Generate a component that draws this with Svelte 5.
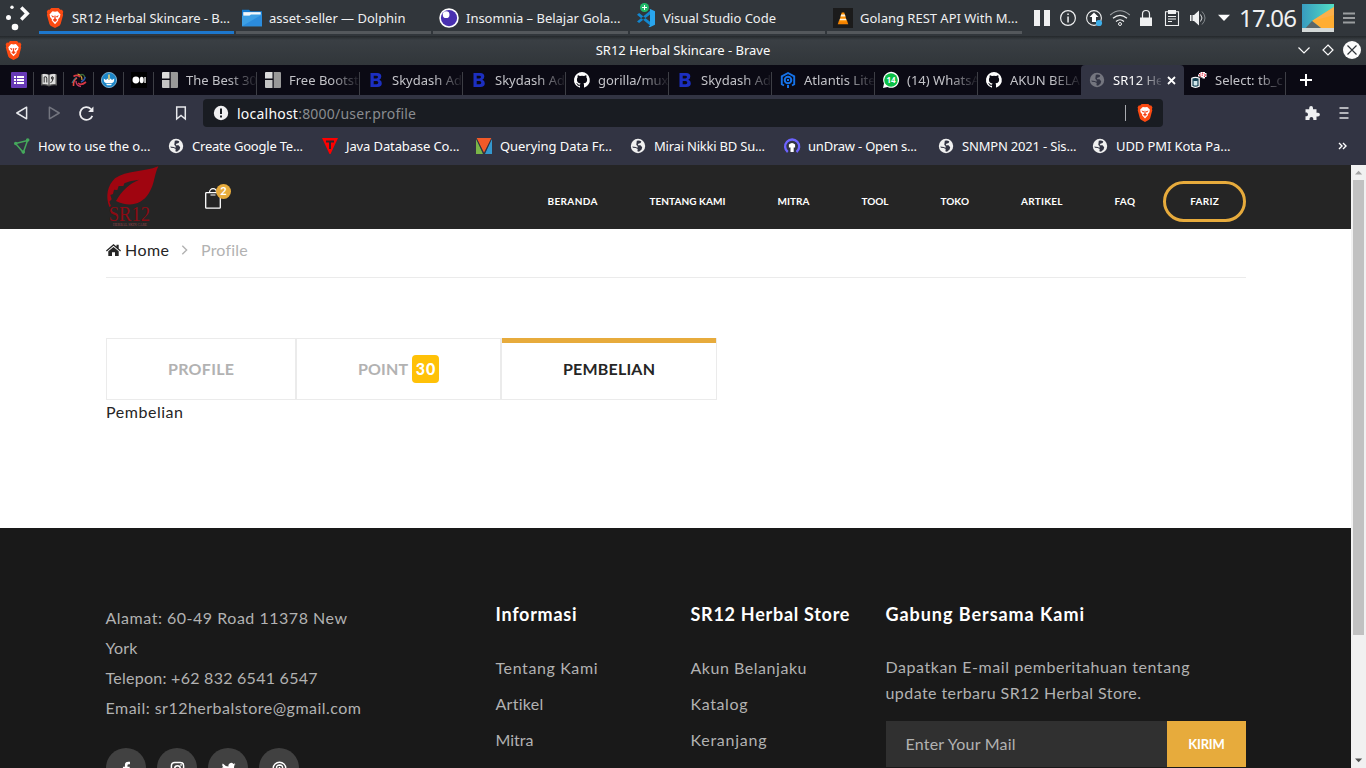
<script>
  const tasks = [
    { icon: 'brave', label: 'SR12 Herbal Skincare - B...', w: 158, active: true },
    { icon: 'folder', label: 'asset-seller — Dolphin', w: 136.5 },
    { icon: 'insomnia', label: 'Insomnia – Belajar Gola...', w: 154.5 },
    { icon: 'vscode', label: 'Visual Studio Code', w: 113 },
    { icon: 'vlc', label: 'Golang REST API With M...', w: 158 }
  ];
  const tray = ['pause', 'info', 'update', 'wifi', 'lock', 'clipboard', 'volume', 'caret'];
  const pinned = ['list', 'book', 'swirl', 'crest', 'medium'];
  const tabs = [
    { icon: 'blocks', label: 'The Best 30' },
    { icon: 'blocks', label: 'Free Bootst' },
    { icon: 'bold', label: 'Skydash Ad' },
    { icon: 'bold', label: 'Skydash Ad' },
    { icon: 'github', label: 'gorilla/mux' },
    { icon: 'bold', label: 'Skydash Ad' },
    { icon: 'atlantis', label: 'Atlantis Lite' },
    { icon: 'whatsapp', label: '(14) WhatsA' },
    { icon: 'github', label: 'AKUN BELA' },
    { icon: 'globe', label: 'SR12 He', active: true },
    { icon: 'database', label: 'Select: tb_c' }
  ];
  const bookmarks = [
    { icon: 'graph', label: 'How to use the o...', w: 112.5 },
    { icon: 'globe', label: 'Create Google Te...', w: 111 },
    { icon: 'tri', label: 'Java Database Co...', w: 113.5 },
    { icon: 'vee', label: 'Querying Data Fr...', w: 112 },
    { icon: 'globe', label: 'Mirai Nikki BD Su...', w: 111 },
    { icon: 'undraw', label: 'unDraw - Open s...', w: 109 },
    { icon: 'globe', label: 'SNMPN 2021 - Sis...', w: 114.5 },
    { icon: 'globe', label: 'UDD PMI Kota Pa...', w: 114.5 }
  ];
  const nav = [
    { label: 'BERANDA', w: 50 },
    { label: 'TENTANG KAMI', w: 76 },
    { label: 'MITRA', w: 32 },
    { label: 'TOOL', w: 27 },
    { label: 'TOKO', w: 28.5 },
    { label: 'ARTIKEL', w: 41.5 },
    { label: 'FAQ', w: 20.5 }
  ];
  const address = [
    { label: 'Alamat: 60-49 Road 11378 New', w: 241.5 },
    { label: 'York', w: 32 },
    { label: 'Telepon: +62 832 6541 6547', w: 212 },
    { label: 'Email: sr12herbalstore@gmail.com', w: 255.5 }
  ];
  const columns = [
    { title: 'Informasi', w: 81, links: [['Tentang Kami', 102], ['Artikel', 48], ['Mitra', 38]] },
    { title: 'SR12 Herbal Store', w: 159, links: [['Akun Belanjaku', 116], ['Katalog', 57], ['Keranjang', 76]] }
  ];
  const socials = ['facebook', 'instagram', 'twitter', 'pinterest'];

  // Spreads the letters of a label over a given width.
  function fit(node, width) {
    const range = document.createRange();
    range.selectNodeContents(node);
    const natural = range.getBoundingClientRect().width;
    const count = [...node.textContent].length;
    const gap = (width - natural) / Math.max(1, count - 1);
    node.style.letterSpacing = gap.toFixed(3) + 'px';
    node.style.marginRight = (-gap).toFixed(3) + 'px';
  }
</script>

{#snippet icon(name, size = 16)}
  <svg class="icon" width={size} height={size} viewBox="0 0 16 16" fill="none">
    {#if name === 'brave'}
      <path d="M5 0h6l1.3 1.4 1.3-.1 1 1.7-.4 1.5.3 1-2 7.3-.9 1.3L8 16l-3.600-1.900-.9-1.300-2-7.300.3-1L1.400 3l1-1.700 1.300.1z" fill="#fb4a12" />
      <path d="M8 2.900 10 2.600l2.400 2.600-.4 1.100.1.700-1.600 2 .1 1L8 12.900 5.400 10l.1-1-1.600-2 .1-.7-.4-1.100L6 2.600z" fill="#fff" />
      <path d="M4.800 5.700 7.200 6.500 6.400 7.700zM11.200 5.700 8.800 6.500l.8 1.200zM7.600 6h.8l.2 2.600L10 9.500 8 10.500 6 9.500l1.400-.9zM6.300 10 8 11.200 9.700 10 8 10.600z" fill="#f33c11" />
    {:else if name === 'folder'}
      <path d="M0 1.300h5.600l1.200 1.200H16V14H0z" fill="#147bd0" />
      <path d="M1 3.300h14v3H1z" fill="#f4f8fb" />
      <path d="M0 6.200h6l1.100-1H16v9.300H0z" fill="#3d9fe4" />
      <path d="M0 14.500 16 5.200v9.300z" fill="#2b8cdd" />
    {:else if name === 'insomnia'}
      <circle cx="8" cy="8" r="7.800" fill="#fff" />
      <circle cx="8" cy="8" r="6.500" fill="#4930b0" />
      <circle cx="5.700" cy="5.300" r="2.700" fill="#fff" />
    {:else if name === 'vscode'}
      <path d="m.8 5.300 1.700-1.300L12 11.500v3zM.8 10.700l1.700 1.300L12 4.500v-3z" fill="#1287cf" />
      <path d="m11 .6 4.200 2v10.800l-4.200 2-1-.6 1.200-.8V2z" fill="#29a5ed" />
    {:else if name === 'vlc'}
      <rect width="16" height="16" fill="#1b1b1b" />
      <path d="M4.800 10h6.400l1 3H3.800z" fill="#f58300" />
      <path d="M7 3.500h2L11.200 11H4.800z" fill="#ff9100" />
      <path d="M6.500 5.100h3l.5 1.700H6zM5.600 8.500h4.800l.4 1.300H5.200z" fill="#fff3df" />
    {:else if name === 'pause'}
      <path d="M0 0h6v16H0zM10 0h6v16h-6z" fill="#eff0f1" />
    {:else if name === 'info'}
      <circle cx="8" cy="8" r="7.400" stroke="#eff0f1" stroke-width="1.200" />
      <path d="M7.300 3.500h1.500V5H7.300zM7.300 6.500h1.500v6H7.300z" fill="#eff0f1" />
    {:else if name === 'update'}
      <circle cx="8" cy="8" r="7.400" stroke="#eff0f1" stroke-width="1.100" />
      <path d="M8 2.500 12.500 7H10v5H6V7H3.500z" fill="#fff" />
      <circle cx="13" cy="13" r="3.100" fill="#3daee9" />
    {:else if name === 'wifi'}
      <path d="M-1.800 5Q8-3.500 17.800 5" stroke="#9da1a5" stroke-width="1.100" />
      <path d="M1 8.300q7-6 14 0M4 11.500q4-3.500 8 0" stroke="#eff0f1" stroke-width="1.200" />
      <circle cx="8" cy="14" r="1.500" stroke="#eff0f1" />
    {:else if name === 'lock'}
      <path d="M4.500 8V4a3.500 3.500 0 0 1 7 0v4" stroke="#eff0f1" stroke-width="1.200" />
      <path d="M2 7.500h12V16H2z" fill="#eff0f1" />
    {:else if name === 'clipboard'}
      <path d="M1.500 1.800h13v13.700h-13z" stroke="#eff0f1" stroke-width="1.100" />
      <path d="M4 0h8v4H4z" fill="#eff0f1" />
      <path d="M4 6.500h8M4 9h8M4 11.500h4" stroke="#eff0f1" />
    {:else if name === 'volume'}
      <path d="M0 5h1.500v6H0zM2.500 5H4l5-4.500v15L4 11H2.500z" fill="#eff0f1" />
      <path d="M10.500 4.500q3 3.500 0 7" stroke="#dfe1e2" />
      <path d="M12 1.500q6 6.500 0 13" stroke="#83888c" />
    {:else if name === 'caret'}
      <path d="M2 4.800h12l-6 6.200z" fill="#fcfcfc" />
    {:else if name === 'list'}
      <rect width="16" height="16" rx="1" fill="#673ab7" />
      <path d="M3 4h2v2H3zM3 7h2v2H3zM3 10h2v2H3zM6 4h7v2H6zM6 7h7v2H6zM6 10h7v2H6z" fill="#fff" />
    {:else if name === 'book'}
      <path d="M0 2.500q4-1.500 8 .5 4-2 8-.5v11q-4-.8-8 1-4-1.800-8-1z" fill="#5c5c5c" />
      <path d="M1.500 2q4-.5 6.500 1v10q-3-1.500-6.500-1zM14.500 2Q10.500 1.500 8 3v10q3-1.500 6.500-1z" fill="#dedede" />
      <path d="M3.200 5v5.500M3.200 5q2.600-1 2.600 1v4.500M11.800 4.500a1.500 1.500 0 1 0 .2 3V5q0 5-2.500 6M8 3v10" stroke="#333" stroke-width="1" />
    {:else if name === 'swirl'}
      <path d="M9 5Q6 2 2.500 4.500" stroke="#d83743" stroke-width="1.700" />
      <path d="M11 8Q11 3 6.500 2" stroke="#e0a53b" stroke-width="1.200" />
      <path d="M9 3q4-2 5 3" stroke="#3c6a3c" stroke-width="1.400" />
      <path d="M10 10q4-2 4-5" stroke="#3157a8" stroke-width="1.600" />
      <path d="M7 11q3 3 8-1" stroke="#d83743" stroke-width="1.700" />
      <path d="M5 9q0 5 5 5.500" stroke="#c23a6a" stroke-width="1.400" />
      <path d="M6 6q-4 2-3.500 8" stroke="#e7493f" stroke-width="1.600" />
      <path d="M5.500 5Q2 8 1 11" stroke="#3b8a9b" stroke-width="1" />
    {:else if name === 'crest'}
      <circle cx="8" cy="8" r="7.600" fill="#1c86c8" stroke="#8fc3e2" stroke-width=".8" />
      <path d="M2.800 6.500 5 8l1.500-1.500L8 8l1.500-1.500L11 8l2.200-1.500Q13.500 10.500 11 11H5Q2.500 10.500 2.800 6.500M5 11.800h6l-1 1.500H6z" fill="#fff" />
      <path d="M7.200 2.500h1.600v5H7.200z" fill="#ead07a" />
    {:else if name === 'medium'}
      <rect width="16" height="16" fill="#000" />
      <circle cx="4.900" cy="8" r="3.400" fill="#fff" /><ellipse cx="10.700" cy="8" rx="2" ry="3.200" fill="#fff" /><path d="M13.400 5h1.300v6h-1.300z" fill="#fff" />
    {:else if name === 'blocks'}
      <path d="M0 1q0-1 1-1h6.500v6.500H0z" fill="#dcdcdc" />
      <path d="M0 8h7.500v8H1q-1 0-1-1z" fill="#c4c4c4" />
      <path d="M8.700 0H15q1 0 1 1v14q0 1-1 1H8.700z" fill="#999" />
    {:else if name === 'bold'}
      <path fill-rule="evenodd" d="M2.500 1h6.800q4 0 4 3.500 0 2.400-2 3.200 2.500.7 2.500 3.500 0 3.800-4.500 3.800H2.500zm3.200 2.700v2.800h2.600q1.700 0 1.700-1.400T8.300 3.700zm0 5.300v3.200h2.900q1.700 0 1.700-1.600T8.600 9z" fill="#1c2fc0" />
    {:else if name === 'github'}
      <path d="M8 0a8 8 0 0 0-2.530 15.590c.4.070.55-.17.55-.38v-1.490C3.800 14.200 3.330 12.700 3.330 12.700c-.36-.92-.89-1.170-.89-1.170-.72-.5.060-.49.060-.49.800.06 1.230.83 1.230.83.710 1.220 1.870.87 2.330.66.070-.51.280-.87.500-1.070-1.770-.2-3.640-.89-3.640-3.950 0-.87.310-1.590.82-2.150-.08-.2-.35-1.020.08-2.120 0 0 .67-.21 2.200.82a7.600 7.600 0 0 1 4 0c1.530-1.030 2.200-.82 2.200-.82.43 1.100.16 1.920.08 2.120.51.560.82 1.270.82 2.150 0 3.070-1.870 3.750-3.650 3.950.29.250.54.730.54 1.480v2.190c0 .21.150.46.550.38A8 8 0 0 0 8 0" fill="#fff" />
    {:else if name === 'atlantis'}
      <path d="M4 13.500 1.800 12.300V4.300L8 1l6.200 3.300v8L12 13.500" stroke="#1572e8" stroke-width="1.900" />
      <circle cx="8" cy="8" r="3.300" stroke="#1572e8" stroke-width="2" />
      <path d="M8 7v2M8 13v3" stroke="#1572e8" stroke-width="2" />
    {:else if name === 'whatsapp'}
      <path d="M0 16 1 11.500A8 8 0 1 1 4.500 15z" fill="#fff" />
      <circle cx="8" cy="8" r="6.800" fill="#0bbf46" />
      <text x="8" y="11" text-anchor="middle" font-size="8" font-weight="700" fill="#fff">14</text>
    {:else if name === 'globe'}
      <circle cx="8" cy="8" r="7.200" fill="#f0f0f0" />
      <path d="M6.800 2.800Q9.500 2 11.300 3.600l-.7 1.500-2.300.6-.6 1.500 2.800.1 1.700 2-.6 2.200-2.600 2.200-1.600-.4.300-2.400-2-1-2.800-.1-.6-1.200 3.300.4 1.900.7.300-1-1.500-1.900z" fill="#323443" />
    {:else if name === 'database'}
      <path d="M.8 6.300q3.700-2 7.400 0v8q-3.700 2-7.400 0z" fill="#123f50" stroke="#fff" stroke-width="1.200" />
      <path d="M2.600 8.700q1.900.8 3.800 0v4.500q-1.900.8-3.800 0z" fill="#cfe6ea" />
      <path d="M8 1h1.500V0H14v1h1.500v4H14v1.500h-2.500v-1H9.500v-1H7V2.500h1z" fill="#fff" />
      <path d="M9.800 1.500 8.300 3l1.500 1.400M13 1.500 14.500 3 13 5M11 1.200h1M11.200 2.500v1.300" stroke="#e1122c" stroke-width="1" />
    {:else if name === 'graph'}
      <path d="m1.500 5.500 12-3-4.200 12z" stroke="#45a85c" stroke-width="1.500" />
      <circle cx="1.700" cy="5.500" r="1.700" fill="#45a85c" /><circle cx="13.700" cy="2" r="1.800" fill="#45a85c" /><circle cx="9.300" cy="14" r="1.800" fill="#45a85c" />
    {:else if name === 'tri'}
      <path d="M0 0h16L8.500 16h-1z" fill="#f00" />
      <path d="M4 2.500h8v2H9V11H7V4.500H4z" fill="#2f2630" />
    {:else if name === 'vee'}
      <path d="M0 0v16h7z" fill="#7ab648" /><path d="M16 0v16H9z" fill="#3498cf" /><path d="M.5 0h15L8 15z" fill="#f15a29" />
      <path d="m0 0 8 16 8-16" stroke="#323443" />
    {:else if name === 'undraw'}
      <path d="M3.800 14A7 7 0 1 1 12.500 14" stroke="#6c63ff" stroke-width="2.400" />
      <path d="M4.900 6.500Q8 3.500 11.100 6.500v3H9.700V14H6.500V9.500H4.900z" fill="#fff" />
    {:else if name === 'back'}
      <path d="M12.600 2.200v11.600L2.800 8z" stroke="#e7e8ec" stroke-width="1.500" stroke-linejoin="round" />
    {:else if name === 'forward'}
      <path d="M3.400 2.200v11.600L13.200 8z" stroke="#73757f" stroke-width="1.500" stroke-linejoin="round" />
    {:else if name === 'reload'}
      <path d="M13.500 10.200A6 6 0 1 1 12.200 3.800" stroke="#eeeef1" stroke-width="1.600" />
      <path d="M14.500 1.500v5h-5z" fill="#eeeef1" />
    {:else if name === 'ribbon'}
      <path d="M3.700 2h8.600v12L8 10.500 3.700 14z" stroke="#e7e8ec" stroke-width="1.500" />
    {:else if name === 'warn'}
      <circle cx="8" cy="8" r="7.200" fill="#f0f0f2" /><path d="M7 3.500h2V9H7zM7 10.500h2v2H7z" fill="#191c22" />
    {:else if name === 'puzzle'}
      <path d="M1.500 4.200h3.700V3a1.900 1.900 0 0 1 3.800 0v1.200h3.500v3.500H14a1.900 1.900 0 0 1 0 3.800h-1.500V15H9.300v-1.200a1.900 1.900 0 0 0-3.800 0V15h-4v-3.800H2.700a1.900 1.900 0 0 0 0-3.600H1.500z" fill="#eff0f2" />
    {:else if name === 'bars'}
      <path d="M3.500 3h9M3.500 8h9M3.500 13h9" stroke="#dfe0e3" stroke-width="1.700" />
    {:else if name === 'facebook'}
      <path d="M6.300 16V9H4.200V6.200h2.100V4.300Q6.300.7 9.700.7q1.200 0 2 .2v2.500h-1.300q-1.400 0-1.400 1.400v1.400h2.500L11.100 9H9v7z" fill="#fff" />
    {:else if name === 'instagram'}
      <rect x="1.500" y="1.500" width="13" height="13" rx="3.500" stroke="#fff" stroke-width="1.600" /><circle cx="8" cy="8" r="3" stroke="#fff" stroke-width="1.600" /><circle cx="11.800" cy="4.200" r=".9" fill="#fff" />
    {:else if name === 'twitter'}
      <path d="M15.500 3.500q-.8.400-1.700.5 1-.6 1.300-1.600l-1.900.7a3 3 0 0 0-5.200 2.700Q4.300 5.600 1.900 2.700a3 3 0 0 0 .9 4l-1.300-.4a3 3 0 0 0 2.400 3l-1.300.1a3 3 0 0 0 2.800 2A6 6 0 0 1 1 12.700 8.500 8.500 0 0 0 14 5z" fill="#fff" />
    {:else if name === 'pinterest'}
      <circle cx="8" cy="8" r="6.700" stroke="#fff" stroke-width="1.500" />
      <path d="M5.400 9.200Q3.600 4.500 8 4.300q3.600 0 3.200 3.100-.5 3-2.600 2.900-1.100-.1-1.300-1L6.200 14M8.200 6.500l-1 3" stroke="#fff" stroke-width="1.600" />
    {/if}
  </svg>
{/snippet}

<div class="screen">
  <div class="taskbar">
    <svg class="launcher" width="30" height="34" viewBox="0 0 30 34" fill="#fcfcfc">
      <circle cx="12" cy="7.300" r="1.700" /><circle cx="8.500" cy="17.500" r="2.500" /><circle cx="15" cy="27" r="3.300" />
      <path d="m20 8.700 2.400-2.400 7.300 7.200-7.300 7.200-2.400-2.400 4.700-4.800z" />
    </svg>
    <div class="tasks">
      {#each tasks as t}
        <div class="task" class:active={t.active}>
          <span class="taskicon">{@render icon(t.icon, 20)}
            {#if t.icon === 'vscode'}<span class="plus"><svg width="9" height="9" viewBox="0 0 9 9"><circle cx="4.500" cy="4.500" r="4.500" fill="#20b868" /><path d="M4.500 2v5M2 4.500h5" stroke="#fff" /></svg></span>{/if}
          </span>
          <span use:fit={t.w}>{t.label}</span>
        </div>
      {/each}
    </div>
    <div class="tray">
      {#each tray as t}<span class="cell">{@render icon(t)}</span>{/each}
    </div>
    <span class="clock"><span use:fit={58}>17.06</span></span>
    <svg class="wallpaper" width="32" height="28" viewBox="0 0 32 28">
      <defs><linearGradient id="sea" x2="1"><stop stop-color="#389bc0" /><stop offset="1" stop-color="#52dfc4" /></linearGradient></defs>
      <path d="M0 0h32v28H0z" fill="url(#sea)" /><path d="M32 3v25H24L10 17z" fill="#ffad32" /><path d="m10 17 22-6V3z" fill="#fbb04b" /><path d="m10 17 14 11H0z" fill="#5b6668" /><path d="M0 24h32v4H0z" fill="#d4d9d8" />
    </svg>
    <svg class="sandwich" width="12" height="12" viewBox="0 0 12 12"><path d="M0 1.500h12M0 6h12M0 10.500h12" stroke="#9a9d9f" stroke-width="2" /></svg>
  </div>

  <div class="titlebar">
    <span class="appicon">{@render icon('brave', 19)}</span>
    <span class="title"><span use:fit={174.500}>SR12 Herbal Skincare - Brave</span></span>
    <div class="controls">
      <svg width="24" height="24" viewBox="0 0 24 24" fill="none"><path d="m6.500 9.500 5.500 5.500 5.500-5.500" stroke="#fcfcfc" stroke-width="1.200" /></svg>
      <svg width="24" height="24" viewBox="0 0 24 24" fill="none"><path d="m12 7 5 5-5 5-5-5z" stroke="#fcfcfc" stroke-width="1.200" /></svg>
      <svg width="24" height="24" viewBox="0 0 24 24" fill="none"><circle cx="12" cy="12" r="9" fill="#fcfcfc" /><path d="m7.500 7.500 9 9m0-9-9 9" stroke="#31363b" stroke-width="1.200" /></svg>
    </div>
  </div>

  <div class="tabstrip">
    {#each pinned as p}<div class="pin">{@render icon(p)}</div>{/each}
    {#each tabs as t}
      <div class="tab" class:active={t.active}>
        {@render icon(t.icon)}
        <span class="tablabel">{t.label}</span>
        {#if t.active}<svg class="close" width="9" height="9" viewBox="0 0 9 9"><path d="m1 1 7 7m0-7-7 7" stroke="#fff" stroke-width="1.800" /></svg>{/if}
      </div>
    {/each}
    <svg class="newtab" width="12" height="12" viewBox="0 0 12 12"><path d="M6 0v12M0 6h12" stroke="#fff" stroke-width="2" /></svg>
  </div>

  <div class="toolbar">
    <span class="tool">{@render icon('back')}</span>
    <span class="tool">{@render icon('forward')}</span>
    <span class="tool">{@render icon('reload', 17)}</span>
    <span class="tool mark">{@render icon('ribbon')}</span>
    <div class="url">
      {@render icon('warn')}
      <span class="urltext"><span use:fit={179}>localhost<i>:8000/user.profile</i></span></span>
      <span class="bar"></span>
      {@render icon('brave', 18)}
    </div>
    <span class="tool puzzle">{@render icon('puzzle')}</span>
    <span class="tool">{@render icon('bars')}</span>
  </div>

  <div class="bookmarks">
    {#each bookmarks as b}
      <div class="bookmark">{@render icon(b.icon)}<span use:fit={b.w}>{b.label}</span></div>
    {/each}
    <svg class="more" width="9" height="8" viewBox="0 0 9 8" fill="none"><path d="m1 1 3 3-3 3m4-6 3 3-3 3" stroke="#fff" stroke-width="1.400" /></svg>
  </div>

  <div class="viewport">
    <div class="page">
      <header>
        <svg class="logo" width="54" height="60" viewBox="18 9 162 180">
          <path d="M175 10C130 28 80 22 45 46 22 68 16 100 28 132l5-3-5-13 7-7-4-13 8-3 3-13 10 1 4-12 14 0 3-8 17-6 27-5C88 62 66 82 48 114c35 18 76 14 99-24 18-30 14-50 28-80" fill="#a00510" />
          <text x="26" y="174" font-family="Liberation Serif" font-size="60" textLength="124" lengthAdjust="spacingAndGlyphs" fill="#8c0a13">SR12</text>
          <text x="39" y="189" font-family="Liberation Serif" font-size="11" textLength="102" lengthAdjust="spacingAndGlyphs" fill="#96464c">HERBAL SKIN CARE</text>
        </svg>
        <div class="bag">
          <svg width="16" height="21" viewBox="0 0 16 21" fill="none" stroke="#fff"><rect x=".7" y="4.700" width="14.600" height="15.500" rx=".8" stroke-width="1.300" /><path d="M4.500 4.500C4.500-.7 11.500-.7 11.500 4.500M5.500 7h5" stroke-width="1.200" /></svg>
          <span class="count">2</span>
        </div>
        <nav>
          {#each nav as n}<a><span use:fit={n.w}>{n.label}</span></a>{/each}
          <a class="user"><span use:fit={28.500}>FARIZ</span></a>
        </nav>
      </header>

      <main>
        <div class="crumbs">
          <svg width="15" height="12" viewBox="0 0 15 12" fill="#252525"><path d="M7.500 0 10.500 2.600V.8h2.200v3.700L15 6.500l-.8.9-6.700-5.700L.8 7.400 0 6.500z" /><path d="m7.500 2.900 5.200 4.400V12H9V8.300H6V12H2.300V7.300z" /></svg>
          <span class="home"><span use:fit={44}>Home</span></span>
          <svg class="arrow" width="7" height="10" viewBox="0 0 7 10" fill="none"><path d="m1.300.8 4.300 4.200-4.300 4.200" stroke="#b2b2b2" stroke-width="1.400" /></svg>
          <span class="here"><span use:fit={46.500}>Profile</span></span>
        </div>
        <div class="switch">
          <div class="option first"><span use:fit={66}>PROFILE</span></div>
          <div class="option second"><span use:fit={50}>POINT</span><b class="badge"><span use:fit={19.500}>30</span></b></div>
          <div class="option third on"><span use:fit={92}>PEMBELIAN</span></div>
        </div>
        <p class="body"><span use:fit={77}>Pembelian</span></p>
      </main>

      <footer>
        <div class="about">
          {#each address as a}<div class="line"><span use:fit={a.w}>{a.label}</span></div>{/each}
          <div class="socials">{#each socials as s}<span class="disc">{@render icon(s, 15)}</span>{/each}</div>
        </div>
        {#each columns as c}
          <div class="column">
            <h5><span use:fit={c.w}>{c.title}</span></h5>
            {#each c.links as [label, w]}<div class="link"><span use:fit={w}>{label}</span></div>{/each}
          </div>
        {/each}
        <div class="join">
          <h5><span use:fit={198.500}>Gabung Bersama Kami</span></h5>
          <div class="copy"><span use:fit={304}>Dapatkan E-mail pemberitahuan tentang</span></div>
          <div class="copy"><span use:fit={255.500}>update terbaru SR12 Herbal Store.</span></div>
          <div class="form">
            <div class="field"><span use:fit={110}>Enter Your Mail</span></div>
            <div class="send"><span use:fit={36.500}>KIRIM</span></div>
          </div>
        </div>
      </footer>
    </div>
    <div class="scroll">
      <svg width="15" height="15" viewBox="0 0 15 15"><path d="M4 9.500h7.200L7.600 5.800z" fill="#a3a3a3" /></svg>
      <div class="thumb"></div>
      <svg class="down" width="15" height="15" viewBox="0 0 15 15"><path d="M4 5.500h7.200L7.600 9.200z" fill="#505050" /></svg>
    </div>
  </div>
</div>

<style>
  :global(body) { overflow: hidden; }
  .screen { width: 1366px; height: 768px; overflow: hidden; display: flex; flex-direction: column; font-family: "Noto Sans", sans-serif; font-size: 13px; color: #fcfcfc; box-sizing: border-box; }
  .screen :global(*) { box-sizing: border-box; }
  svg { display: block; flex: none; }
  .icon { overflow: visible; }
  span { white-space: nowrap; }

  .taskbar { height: 36px; flex: none; display: flex; background: #31363b; color: #eff0f1; }
  .launcher { margin-right: 9px; }
  .tasks { display: flex; gap: 2px; }
  .task { width: 195px; height: 34px; border-bottom: 3px solid #54585c; padding: 5px 0 0 6px; display: flex; align-items: center; gap: 7px; }
  .task.active { border-color: #1d77cc; }
  .taskicon { position: relative; }
  .plus { position: absolute; left: 4px; top: -5px; }
  .tray { display: flex; margin-left: 7px; }
  .cell { width: 26px; height: 36px; display: grid; place-items: center; }
  .clock { width: 65px; padding-left: 2px; font-size: 24px; line-height: 36px; }
  .wallpaper { margin: 4px 9px 0 0; }
  .sandwich { margin-top: 12px; }

  .titlebar { height: 29px; flex: none; display: grid; grid-template-columns: 100px 1fr 100px; align-items: center; background: linear-gradient(#24282b, #3a3f44 4px, #31363a); }
  .appicon { padding-left: 4px; }
  .title { text-align: center; padding-bottom: 2px; }
  .controls { display: flex; justify-content: flex-end; padding: 0 2px 1px 0; }

  .tabstrip { height: 30px; flex: none; display: flex; background: #0b0a14; padding-left: 4px; }
  .pin, .tab { background: linear-gradient(#3d3e45, #3d3e45) right bottom / 1px 23px no-repeat; display: flex; align-items: center; }
  .pin { width: 30px; justify-content: center; }
  .tab { width: 103px; padding-left: 8px; gap: 8px; }
  .tab:nth-child(14) { background: none; }
  .tab:last-of-type { width: 102px; padding-left: 7px; }
  .tab.active { background: #323443; border-radius: 4px 4px 0 0; }
  .tab.active .icon { opacity: .35; }
  .tablabel { width: 70px; overflow: hidden; color: #c3c3c8; line-height: 20px; mask-image: linear-gradient(90deg, #000 42px, transparent 72px); }
  .active .tablabel { width: 48px; color: #fff; mask-image: linear-gradient(90deg, #000 24px, transparent 52px); margin-right: -2px; }
  .newtab { margin: 9px 0 0 14px; }

  .toolbar { height: 36px; flex: none; background: #323443; display: flex; align-items: center; padding-left: 6px; }
  .tool { width: 32px; display: grid; place-items: center; }
  .mark { margin: 0 6px 0 63px; }
  .url { width: 960px; height: 28px; background: #191c22; border-radius: 4px; display: flex; align-items: center; padding: 0 9px 0 10px; }
  .urltext { margin-left: 8px; flex: 1; font-size: 14px; }
  .urltext i { font-style: normal; color: #8a8c90; }
  .bar { width: 1px; height: 16px; background: #a9abb0; margin-right: 10px; }
  .puzzle { margin-left: 133px; }

  .bookmarks { height: 34px; flex: none; background: #323443; display: flex; padding: 0 0 4px 14px; align-items: center; }
  .bookmark { width: 154px; display: flex; align-items: center; gap: 8px; }
  .more { margin-left: 92px; }

  .viewport { flex: 1; min-height: 0; display: flex; font-family: Lato, sans-serif; font-size: 16px; }
  .page { width: 1351px; background: #fff; overflow: hidden; display: flex; flex-direction: column; }
  header { height: 64px; flex: none; background: #252525; padding: 0 105px 0 106px; display: flex; align-items: flex-start; }
  .logo { margin-top: 1px; overflow: visible; }
  .bag { position: relative; margin: 23px 0 0 45px; }
  .count { position: absolute; left: 11px; top: -4px; width: 15px; height: 15px; border-radius: 50%; background: #e7ab3c; color: #fff; font-size: 11px; font-weight: 700; line-height: 14px; text-align: center; }
  nav { margin: 16px 0 0 auto; display: flex; gap: 52px; font-size: 10px; font-weight: 700; line-height: 41px; color: #fff; }
  .user { margin-left: -24px; width: 83px; height: 41px; border: 3px solid #e7ab3c; border-radius: 21px; line-height: 35px; text-align: center; }

  main { height: 299px; flex: none; padding: 0 105px 0 106px; color: #252525; }
  .crumbs { height: 49px; border-bottom: 1px solid #ebebeb; display: flex; align-items: center; padding-bottom: 6px; line-height: 24px; }
  .home { margin-left: 4px; width: 56px; }
  .here { margin-left: 13px; color: #b2b2b2; }
  .switch { display: flex; margin-top: 60px; font-weight: 700; color: #b2b2b2; }
  .option { height: 62px; border: 1px solid #ebebeb; display: flex; align-items: center; justify-content: center; line-height: 18px; }
  .first { width: 190px; }
  .second { width: 205px; gap: 4px; }
  .third { width: 216px; }
  .on { color: #252525; border-top: 0; background: linear-gradient(#e7ab3c, #e7ab3c) top / 100% 5px no-repeat; }
  .badge { width: 27px; height: 28px; border-radius: 4px; background: #ffc107; color: #fff; line-height: 28px; text-align: center; }
  .body { margin: 0; line-height: 24px; }

  footer { flex: 1; background: #191919; padding: 0 105px 0 105.500px; display: flex; color: #b2b2b2; }
  .about { width: 390px; padding-top: 75px; }
  .line { line-height: 30px; height: 30px; }
  .socials { display: flex; gap: 11px; margin: 25px 0 0 .5px; }
  .disc { width: 40px; height: 40px; border-radius: 50%; background: #414141; display: grid; place-items: center; }
  .column { width: 195px; padding-top: 72px; }
  h5 { margin: 0 0 27px; height: 28px; font-size: 18px; line-height: 28px; font-weight: 700; color: #fff; }
  .link { line-height: 26px; height: 26px; margin-bottom: 10px; }
  .join { width: 360.500px; padding-top: 72px; }
  .copy { line-height: 26px; height: 26px; position: relative; top: -1px; }
  .form { display: flex; height: 46px; margin: 14px 0 0 .5px; }
  .field { width: 281px; background: #303030; padding-left: 19.500px; line-height: 45px; }
  .send { flex: 1; background: #e7ab3c; color: #fff; font-size: 13px; font-weight: 700; line-height: 46px; text-align: center; }

  .scroll { width: 15px; background: #f1f1f1; display: flex; flex-direction: column; }
  .thumb { width: 11px; height: 455px; margin-left: 2px; background: #c1c1c1; }
  .down { margin-top: auto; }
</style>
